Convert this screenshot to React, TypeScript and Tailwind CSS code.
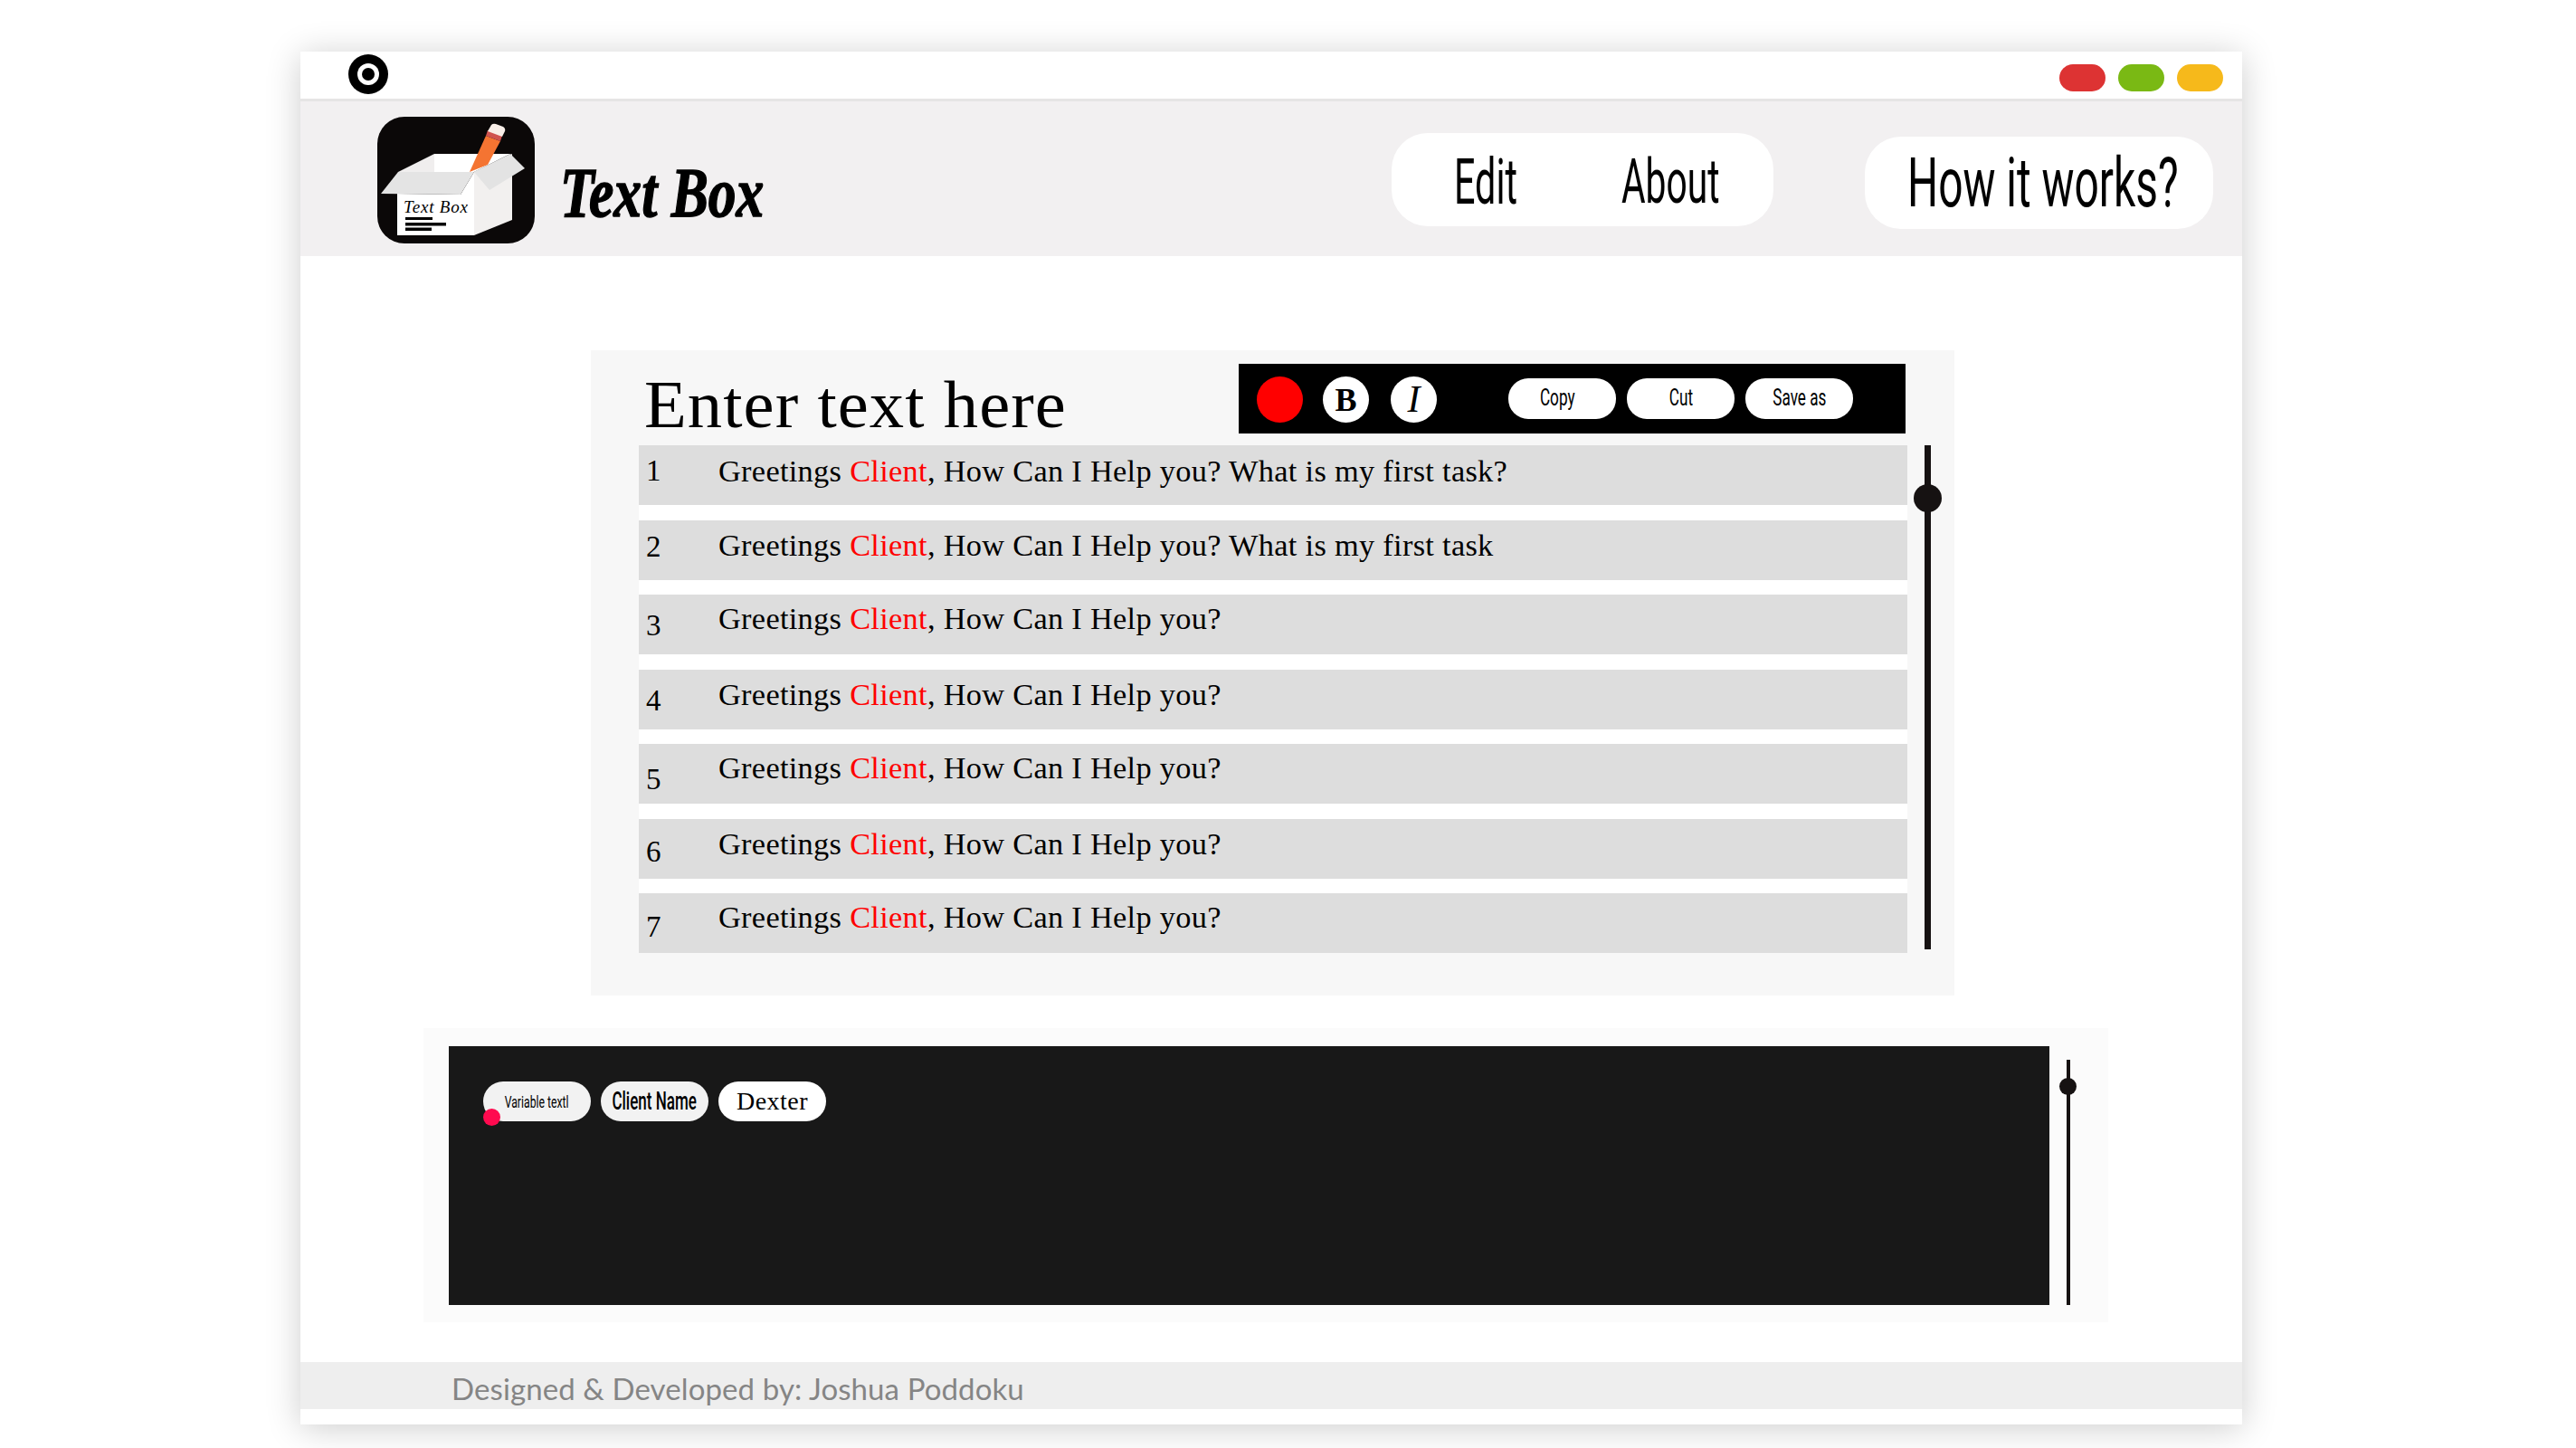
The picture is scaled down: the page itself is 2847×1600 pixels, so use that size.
import React from 'react';

const SERIF = "font-['Liberation_Serif',serif]";

const rows = [
  { n: 1, text: ', How Can I Help you? What is my first task?', numClass: '-translate-y-[1px]', textClass: 'translate-y-0' },
  { n: 2, text: ', How Can I Help you? What is my first task', numClass: 'translate-y-0', textClass: '-translate-y-[1px]' },
  { n: 3, text: ', How Can I Help you?', numClass: 'translate-y-[5px]', textClass: '-translate-y-[2px]' },
  { n: 4, text: ', How Can I Help you?', numClass: 'translate-y-[5px]', textClass: '-translate-y-[1px]' },
  { n: 5, text: ', How Can I Help you?', numClass: 'translate-y-[10px]', textClass: '-translate-y-[2px]' },
  { n: 6, text: ', How Can I Help you?', numClass: 'translate-y-[7px]', textClass: '-translate-y-[1px]' },
  { n: 7, text: ', How Can I Help you?', numClass: 'translate-y-[8px]', textClass: '-translate-y-[2px]' },
];

function Logo() {
  return (
    <svg viewBox="0 0 174 140" className="w-[174px] h-[140px] shrink-0">
      <rect width="174" height="140" rx="30" fill="#0b0808" />
      <polygon points="63,41 147,41 107,61 63,61" fill="#ffffff" />
      <polygon points="23,61 63,41 63,61" fill="#f0eeee" />
      <polygon points="107,61 149,41 149,114 107,131" fill="#f2f0ef" />
      <polygon points="22,85 92,86 107,61 107,131 22,131" fill="#ffffff" />
      <polygon points="4,85 23,61 107,61 92,86" fill="#e4e4e4" />
      <polygon points="107,61 147,41 163,57 124,81" fill="#e3e3e3" />
      <polygon points="102,61 122,53 136,27 120,21" fill="#f47432" />
      <polygon points="120,21 136,27 138,21 122,15" fill="#d0534f" />
      <path d="M122 16 L126 9 Q128 7 131 8 L139 11 Q142 13 141 16 L138 22 Z" fill="#f8eee8" />
      <text x="29" y="106" textLength="71" fontSize="19" fontStyle="italic" fontFamily="'Liberation Serif', serif" fill="#000">
        Text Box
      </text>
      <rect x="31" y="111" width="30" height="3" fill="#000" />
      <rect x="31" y="117" width="45" height="3.5" fill="#000" />
      <rect x="31" y="122.5" width="29" height="3.5" fill="#000" />
    </svg>
  );
}

function Squeezed({ children, className }: { children: React.ReactNode; className: string }) {
  return (
    <span className={`inline-block origin-left whitespace-nowrap font-['Roboto',sans-serif] ${className}`}>
      {children}
    </span>
  );
}

export default function App() {
  return (
    <div className="w-[2847px] h-[1600px] overflow-hidden bg-white pt-[57px] pl-[332px]">
      <div className="w-[2146px] h-[1517px] flex flex-col bg-white shadow-[0_4px_36px_rgba(0,0,0,0.2)]">
        {/* title bar */}
        <div className="h-[55px] shrink-0 flex items-start justify-between border-b-[3px] border-[#e6e5e5]">
          <div className="mt-[3px] ml-[53px] w-[44px] h-[44px] rounded-full bg-black flex items-center justify-center">
            <div className="w-[24px] h-[24px] rounded-full bg-white flex items-center justify-center">
              <div className="w-[14px] h-[14px] rounded-full bg-black" />
            </div>
          </div>
          <div className="mt-[14px] mr-[21px] flex gap-[14px]">
            <div className="w-[51px] h-[30px] rounded-[15px] bg-[#dd3333]" />
            <div className="w-[51px] h-[30px] rounded-[15px] bg-[#7ab914]" />
            <div className="w-[51px] h-[30px] rounded-[15px] bg-[#f6b91b]" />
          </div>
        </div>

        {/* header */}
        <div className="h-[171px] shrink-0 bg-[#f2f0f1] flex items-start pl-[85px] pr-[32px]">
          <div className="mt-[17px]">
            <Logo />
          </div>
          <div className="mt-[61px] ml-[28px] h-[80px] w-[234px]">
            <span className="inline-block origin-left scale-x-[0.79] whitespace-nowrap font-['Liberation_Serif',serif] text-[78px] leading-[80px] font-bold italic text-black [-webkit-text-stroke:1.5px_black]">
              Text Box
            </span>
          </div>
          <div className="mt-[35px] ml-auto w-[422px] h-[103px] rounded-[40px] bg-white flex items-center pl-[69px] gap-[115px] text-black">
            <div className="w-[70px] pt-[5px]">
              <Squeezed className="scale-x-[0.59] text-[70px] leading-[80px] font-normal">Edit</Squeezed>
            </div>
            <div className="w-[110px] pt-[5px]">
              <Squeezed className="scale-x-[0.6] text-[68px] leading-[80px] font-normal">About</Squeezed>
            </div>
          </div>
          <div className="mt-[39px] ml-[101px] w-[385px] h-[102px] rounded-[40px] bg-white flex items-center pl-[47px] text-black">
            <Squeezed className="scale-x-[0.63] text-[76px] leading-[84px] font-normal">How it works?</Squeezed>
          </div>
        </div>

        {/* editor */}
        <div className="mt-[104px] ml-[321px] w-[1507px] h-[713px] shrink-0 bg-[#f7f7f7] pl-[53px] pt-[15px]">
          <div className="w-[1402px] h-[77px] flex items-start justify-between pr-[2px]">
            <h1 className={`${SERIF} ml-[6px] mt-[3px] origin-left scale-x-[1.05] whitespace-nowrap text-[73px] leading-[86px] font-normal tracking-[1px] text-black`}>
              Enter text here
            </h1>
            <div className="w-[737px] h-[77px] bg-black flex items-start pl-[20px]">
              <div className="mt-[14px] w-[51px] h-[51px] rounded-full bg-[#ff0000]" />
              <div className={`${SERIF} mt-[14px] ml-[22px] w-[51px] h-[51px] rounded-full bg-white flex items-center justify-center text-[36px] font-bold text-black`}>
                B
              </div>
              <div className={`${SERIF} mt-[14px] ml-[24px] w-[51px] h-[51px] rounded-full bg-white flex items-center justify-center text-[42px] italic text-black`}>
                I
              </div>
              {['Copy', 'Cut', 'Save as'].map((label, i) => (
                <div
                  key={label}
                  className={`mt-[16px] h-[45px] w-[119px] rounded-[22px] bg-white flex items-center justify-center pb-[3px] text-black ${i === 0 ? 'ml-[79px] pr-[10px]' : 'ml-[12px]'}`}
                >
                  <span className="inline-block scale-x-[0.66] whitespace-nowrap font-['Roboto',sans-serif] text-[26px]">
                    {label}
                  </span>
                </div>
              ))}
            </div>
          </div>

          <div className="flex mt-[13px]">
            <div className="w-[1402px] flex flex-col gap-[16.5px] bg-white">
              {rows.map(r => (
                <div key={r.n} className={`${SERIF} h-[66px] bg-[#dddddd] flex text-[33px] leading-[58px] text-black`}>
                  <span className={`w-[88px] pl-[8px] shrink-0 ${r.numClass}`}>{r.n}</span>
                  <span className={`inline-block origin-left scale-x-[1.04] whitespace-nowrap tracking-[0.3px] ${r.textClass}`}>
                    Greetings <span className="text-[#ff0000]">Client</span>
                    {r.text}
                  </span>
                </div>
              ))}
            </div>
            <div className="relative ml-[19px] w-[7px] h-[557px] bg-[#161212]">
              <div className="absolute left-[-12px] top-[43px] w-[31px] h-[31px] rounded-full bg-[#161212]" />
            </div>
          </div>
        </div>

        {/* variables panel */}
        <div className="mt-[36px] ml-[136px] w-[1862px] h-[325px] shrink-0 bg-[#fbfbfb] flex pl-[28px] pt-[20px]">
          <div className="w-[1769px] h-[286px] bg-[#181818] flex items-start gap-[11px] pt-[39px] pl-[38px]">
            <div className="relative w-[119px] h-[44px] rounded-[22px] bg-[#f2f2f2] flex items-center justify-center">
              <span className="inline-block scale-x-[0.68] whitespace-nowrap font-['Roboto',sans-serif] text-[18px] text-black">
                Variable textl
              </span>
              <div className="absolute left-0 top-[30px] w-[19px] h-[19px] rounded-full bg-[#ff0a4f]" />
            </div>
            <div className="w-[119px] h-[44px] rounded-[22px] bg-[#f2f2f2] flex items-center justify-center">
              <span className="inline-block scale-x-[0.63] whitespace-nowrap font-['Roboto',sans-serif] text-[27px] font-medium text-black">
                Client Name
              </span>
            </div>
            <div className={`${SERIF} w-[119px] h-[44px] rounded-[22px] bg-white flex items-center justify-center text-[28px] tracking-[0.5px] text-black`}>
              Dexter
            </div>
          </div>
          <div className="relative ml-[19px] mt-[15px] w-[4px] h-[271px] bg-[#161212]">
            <div className="absolute left-[-8px] top-[20px] w-[19px] h-[19px] rounded-full bg-[#161212]" />
          </div>
        </div>

        {/* footer */}
        <div className="mt-[44px] h-[52px] shrink-0 bg-[#eeeeee] pl-[167px] pt-[3px] font-['Lato',sans-serif] text-[33px] tracking-[0.1px] leading-[52px] text-[#858585]">
          Designed &amp; Developed by: Joshua Poddoku
        </div>
      </div>
    </div>
  );
}
